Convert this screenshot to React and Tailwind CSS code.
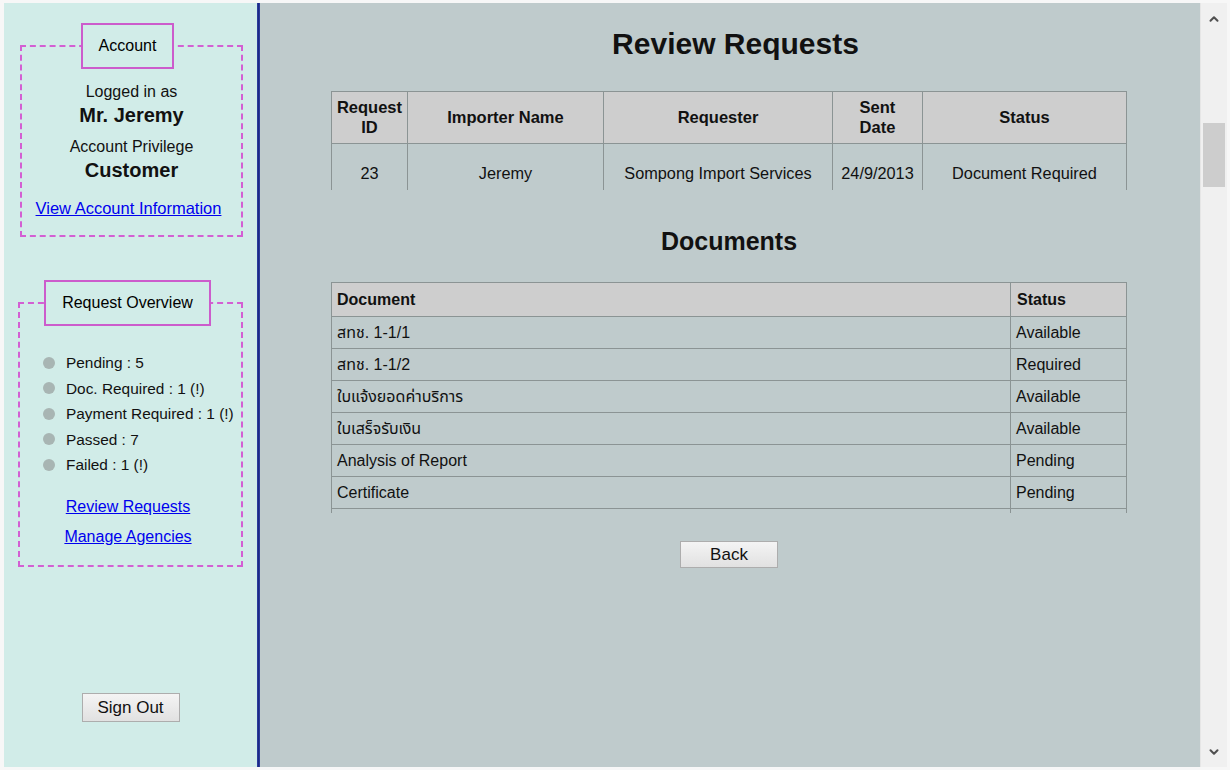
import { ChevronUp, ChevronDown } from 'lucide-react';

const font = { fontFamily: '"Liberation Sans", Arial, "Noto Sans", sans-serif' };

const overview = [
  'Pending : 5',
  'Doc. Required : 1 (!)',
  'Payment Required : 1 (!)',
  'Passed : 7',
  'Failed : 1 (!)',
];

const documents = [
  ['สทช. 1-1/1', 'Available'],
  ['สทช. 1-1/2', 'Required'],
  ['ใบแจ้งยอดค่าบริการ', 'Available'],
  ['ใบเสร็จรับเงิน', 'Available'],
  ['Analysis of Report', 'Pending'],
  ['Certificate', 'Pending'],
  ['', ''],
];

// legend alignment follows its own text-align, so keep it left and center the label inside
function Legend({ children, className }) {
  return (
    <legend className={`h-[46px] border-2 border-[#cc5ccc] text-left text-[16px] leading-[42px] text-black ${className}`}>
      <span className="block text-center">{children}</span>
    </legend>
  );
}

function GreyButton({ children, className }) {
  return (
    <button
      className={`w-[98px] border border-[#adadad] bg-gradient-to-b from-[#f4f4f4] to-[#e1e1e1] text-[17px] text-[#111] ${className}`}
    >
      {children}
    </button>
  );
}

function Sidebar() {
  return (
    <aside className="flex w-[253px] flex-col bg-[#d1ece8]">
      <fieldset className="ml-[16px] mt-[20px] w-[223px] border-2 border-dashed border-[#d35fd3] pb-[17px] text-center">
        <Legend className="ml-[59px] w-[93px]">Account</Legend>
        <p className="mt-[13px] text-[16px] leading-[20px]">Logged in as</p>
        <p className="mt-[1px] text-[20px] font-bold leading-[24px]">Mr. Jeremy</p>
        <p className="mt-[10px] text-[16px] leading-[20px]">Account Privilege</p>
        <p className="mt-[1px] text-[20px] font-bold leading-[24px]">Customer</p>
        <a href="#" className="mt-[16px] block pr-[6px] text-[16.5px] leading-[20px] text-[#0000ee] underline">
          View Account Information
        </a>
      </fieldset>

      <fieldset className="ml-[14px] mt-[43px] w-[225px] border-2 border-dashed border-[#d35fd3] pb-[18px]">
        <Legend className="ml-[24px] h-[44px] w-[167px] text-[15.5px] leading-[40px]">
          Request Overview
        </Legend>
        <ul className="mt-[24px]">
          {overview.map((item) => (
            <li key={item} className="flex h-[25.5px] items-center pl-[23px] text-[15.4px]">
              <span className="h-[12px] w-[12px] rounded-full bg-[#a8b5b3]" />
              <span className="ml-[11px]">{item}</span>
            </li>
          ))}
        </ul>
        <div className="pr-[5px] text-center text-[16px] leading-[20px]">
          <a href="#" className="mt-[19px] block text-[#0000ee] underline">Review Requests</a>
          <a href="#" className="mt-[10px] block text-[#0000ee] underline">Manage Agencies</a>
        </div>
      </fieldset>

      <GreyButton className="mx-auto mb-[45px] mt-auto h-[29px]">Sign Out</GreyButton>
    </aside>
  );
}

function Main() {
  const th = 'border border-[#8b9494] bg-[#cecece] font-bold';
  const td = 'border border-[#8b9494]';
  return (
    <main className="flex flex-1 flex-col items-center bg-[#bfcbcc] pr-[2px] pt-[24px] text-[16px] text-[#111]">
      <h1 className="pl-[13px] text-[30px] font-bold leading-[34px]">Review Requests</h1>

      <div className="mt-[30px] h-[99px] w-[796px] overflow-hidden">
        <table className="w-[795px] table-fixed border-collapse border border-[#8b9494] text-center">
          <colgroup>
            <col className="w-[76px]" />
            <col className="w-[196px]" />
            <col className="w-[229px]" />
            <col className="w-[90px]" />
            <col className="w-[204px]" />
          </colgroup>
          <thead>
            <tr className="h-[52px] text-[16.5px] leading-[20px]">
              <th className={`${th} pb-[1px]`}>Request<br />ID</th>
              <th className={`${th} pb-[1px]`}>Importer Name</th>
              <th className={`${th} pb-[1px]`}>Requester</th>
              <th className={`${th} pb-[1px]`}>Sent<br />Date</th>
              <th className={`${th} pb-[1px]`}>Status</th>
            </tr>
          </thead>
          <tbody>
            <tr className="h-[60px] text-[16.3px]">
              <td className={td}>23</td>
              <td className={td}>Jeremy</td>
              <td className={td}>Sompong Import Services</td>
              <td className={td}>24/9/2013</td>
              <td className={td}>Document Required</td>
            </tr>
          </tbody>
        </table>
      </div>

      <h2 className="mt-[37px] text-[25px] font-bold leading-[28px]">Documents</h2>

      <div className="mt-[27px] h-[231px] w-[796px] overflow-hidden">
        <table className="w-[795px] table-fixed border-collapse border border-[#8b9494] text-left">
          <colgroup>
            <col className="w-[679px]" />
            <col className="w-[116px]" />
          </colgroup>
          <thead>
            <tr className="h-[34px]">
              <th className={`${th} px-[5px]`}>Document</th>
              <th className={`${th} px-[6px]`}>Status</th>
            </tr>
          </thead>
          <tbody>
            {documents.map(([name, status], i) => (
              <tr key={i} className="h-[32px]">
                <td className={`${td} px-[5px]`} style={{ fontFamily: '"Liberation Sans", "Noto Sans Thai", "DejaVu Sans", sans-serif' }}>{name}</td>
                <td className={`${td} px-[5px]`}>{status}</td>
              </tr>
            ))}
          </tbody>
        </table>
      </div>

      <GreyButton className="mt-[28px] h-[27px]">Back</GreyButton>
    </main>
  );
}

function Scrollbar() {
  return (
    <div className="flex w-[27px] flex-col items-center border-l border-[#e6e6e6] bg-[#f0f0f0]">
      <ChevronUp size={14} strokeWidth={3.5} className="mt-[9px] text-[#505050]" />
      <div className="mt-[97px] h-[64px] w-[22px] bg-[#cdcdcd]" />
      <ChevronDown size={14} strokeWidth={3.5} className="mb-[8px] mt-auto text-[#505050]" />
    </div>
  );
}

export default function App() {
  return (
    <div className="h-[770px] w-[1230px] bg-[#f7f7f7] pb-[3px] pl-[4px] pr-[3px] pt-[3px] text-[#111]" style={font}>
      <div className="flex h-full">
        <Sidebar />
        <div className="w-[3px] border-x border-[#2a3a9c] bg-[#1d2a82]" />
        <Main />
        <Scrollbar />
      </div>
    </div>
  );
}
